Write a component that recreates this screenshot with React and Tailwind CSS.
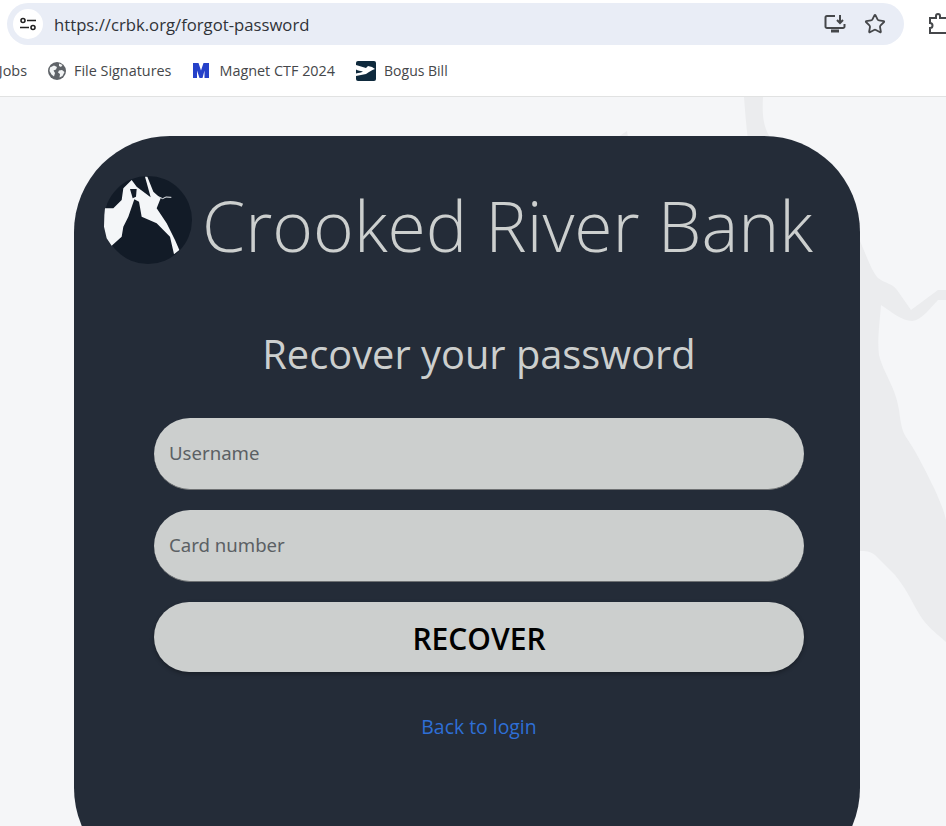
import React from 'react';
import { Star } from 'lucide-react';

const Globe = () => (
  <svg width="18" height="18" viewBox="0 0 18 18">
    <circle cx="9" cy="9" r="9" fill="#5f6368" />
    <path d="M2 5.500 6 3.500 9 5 8 7.500 5.500 8.500 7 11 6 14.500 3.500 12.500 1.500 9Z M11 8.500 14 8 16.500 10 14.500 14 11.500 15.500 12 12 10 10.500Z M11 1.500 14.500 3 13 5 11 4Z" fill="#f1f3f4" />
  </svg>
);

const Magnet = () => (
  <svg width="18" height="18" viewBox="0 0 18 18">
    <path d="M1 1h5.500L9 8.500 11.500 1H17v15h-4.500V8.500L10.500 16h-3L5 8.500V16H1Z" fill="#2541c9" />
  </svg>
);

const Bogus = () => (
  <svg width="20" height="20" viewBox="0 0 20 20">
    <rect width="20" height="20" rx="2" fill="#0f2a3d" />
    <path d="M0 4 10 7 12 5 16 6 19 8C16 9 15 10 13 11L10 13 0 15V12.500C3 12 5 11.500 7 10.500 4 10 2 9.500 0 8.500Z" fill="#fff" />
  </svg>
);

// coordinates traced from the logo, viewBox is the circle's bounding box
const Logo = () => (
  <svg className="shrink-0" width="88" height="88" viewBox="42 33 264 264">
    <circle cx="174" cy="165" r="132" fill="#121b27" />
    <path className="blur-[0.5px]" d="M43 150 45 130 70 130 95 105 100 70 125 45 140 65 182 97 165 35 172 35 190 80 212 100 200 130 230 175 255 225 268 255 252 268 240 215 200 175 155 155 147 110 133 103 115 155 100 185 95 215 65 242 50 220 42 185Z" fill="#f4f6f8" />
    <path d="M120 72 140 72 138 95 128 100Z" fill="#121b27" />
    <path d="M205 95 218 101 228 96 244 97" fill="none" stroke="#e8ecf0" strokeWidth="3" />
  </svg>
);

const Field = ({ label }) => (
  <div className="flex h-[72px] items-center rounded-[36px] border-b border-[#6f7274] bg-[#cccfce] pb-px pl-[15px] font-['Noto_Sans',sans-serif] text-[18.6px] text-[#5b6064]">
    {label}
  </div>
);

export default function App() {
  return (
    <div className="relative h-[826px] w-[946px] overflow-hidden bg-[#f5f6f8] font-['Open_Sans',sans-serif]">
      <svg className="absolute left-0 top-0" width="946" height="826" viewBox="0 0 946 826">
        <path d="M744 97H763C762 115 763 128 772 140H748C746 125 745 110 744 97Z" fill="#ebecee" />
        <path d="M618 137 627 131 628 137Z" fill="#ebecee" />
        <path d="M858 236C866 255 872 272 878 278 886 284 892 283 897 290L911 310 938 290H946V300H938C930 308 922 320 912 321 902 321 892 312 881 305 880 320 877 340 879 355 884 375 895 385 899 410 901 425 902 432 908 440 918 455 925 470 935 490 940 502 944 510 946 520V642C935 632 925 625 918 612 910 598 905 587 895 575L875 555C870 551 865 551 860 551H850V236Z" fill="#ebecee" />
      </svg>

      <div className="relative">
        <div className="h-[97px] border-b border-[#e1e2e2] bg-white">
          <div className="flex h-[48px] items-center">
            <div className="ml-[7px] flex h-[42px] w-[897px] shrink-0 items-center rounded-[21px] bg-[#e9edf6] pl-[6px]">
              <div className="flex h-[30px] w-[30px] items-center justify-center rounded-full bg-white">
                <svg width="18" height="14" viewBox="0 0 18 14" fill="none" stroke="#222" strokeWidth="1.6">
                  <circle cx="4" cy="3.500" r="2" />
                  <path d="M8 3.500h9M1 10.500h9" />
                  <circle cx="14" cy="10.500" r="2" />
                </svg>
              </div>
              <span className="ml-[11px] pt-px text-[16.7px] text-[#303338]">https://crbk.org/forgot-password</span>
              <svg className="ml-auto" width="22" height="20" viewBox="0 0 22 20" fill="none" stroke="#45474a" strokeWidth="2">
                <path d="M11 2H3a1.500 1.500 0 0 0-1.500 1.500v9A1.500 1.500 0 0 0 3 14h16a1.500 1.500 0 0 0 1.500-1.500V10" />
                <path d="M16 1v7M13 6l3 3 3-3" />
                <path d="M7 17h8" strokeWidth="3" />
              </svg>
              <Star className="ml-[18px] mr-[18px] text-[#45474a]" size={22} strokeWidth={2} />
            </div>
            <svg className="ml-[25px] shrink-0" width="20" height="22" viewBox="0 0 20 22" fill="none" stroke="#45474a" strokeWidth="2">
              <path d="M1 5h6V3a2 2 0 0 1 4 0v2h8v15H1v-5a2.500 2.500 0 0 0 0-5Z" />
            </svg>
          </div>
          <div className="flex h-[46px] items-center whitespace-nowrap text-[14.4px] leading-[20px] text-[#45474a]">
            <span className="ml-[-2px] w-[29px] overflow-hidden whitespace-nowrap [direction:rtl]">Jobs</span>
            <span className="ml-[21px] flex items-center gap-[8px]"><Globe />File Signatures</span>
            <span className="ml-[21px] flex items-center gap-[9px]"><Magnet />Magnet CTF 2024</span>
            <span className="ml-[21px] flex items-center gap-[8px] text-[14px]"><Bogus />Bogus Bill</span>
          </div>
        </div>

        <div className="ml-[74px] mt-[39px] h-[748px] w-[786px] rounded-[96px] bg-[#242c38] pt-[40px]">
          <div className="ml-[30px] flex items-start gap-[10px]">
            <Logo />
            <span className="whitespace-nowrap pt-[5px] text-[69.6px] font-light leading-[88px] text-[#cccfce]">Crooked River Bank</span>
          </div>
          <h1 className="mt-[55px] pl-[24px] text-center text-[39.800px] font-normal leading-[60px] text-[#cccfce]">Recover your password</h1>
          <div className="ml-[80px] mt-[34px] flex w-[650px] flex-col gap-[20px]">
            <Field label="Username" />
            <Field label="Card number" />
            <button className="h-[70px] rounded-[35px] bg-[#cccfce] pt-[2px] text-[30px] font-semibold text-black shadow-[0_2px_4px_rgba(0,0,0,0.3)]">RECOVER</button>
            <a className="mt-[20px] text-center text-[19.400px] text-[#2e6fd6]">Back to login</a>
          </div>
        </div>
      </div>
    </div>
  );
}
